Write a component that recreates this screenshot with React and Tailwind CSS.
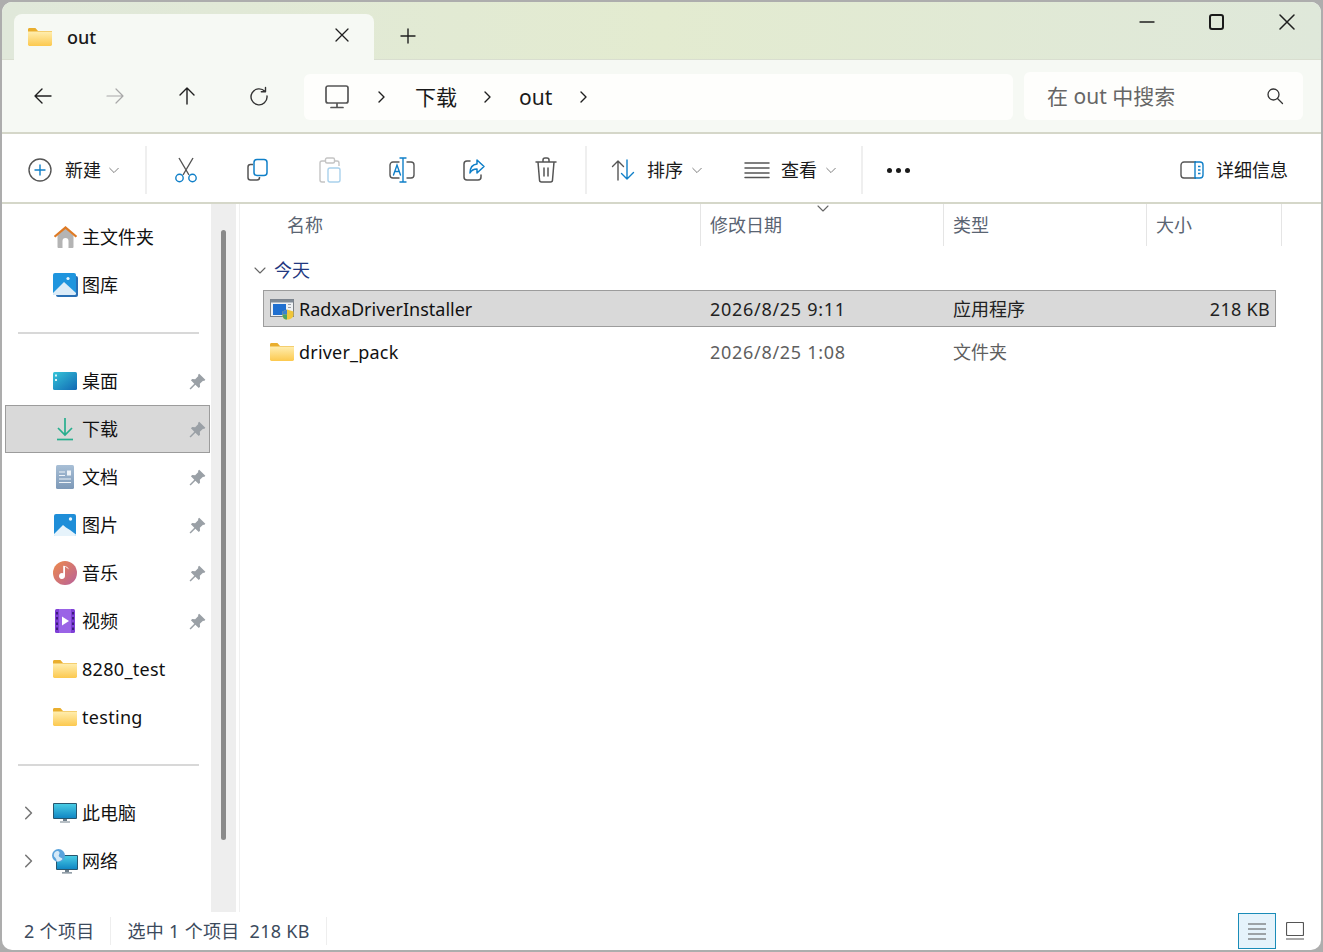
const font = { fontFamily: '"Noto Sans", "Noto Sans CJK SC", sans-serif' };

const Line = ({ w = 24, h = 24, vb, sw = 1.4, stroke = "#1f1f1f", children }) => (
  <svg width={w} height={h} viewBox={vb || `0 0 ${w} ${h}`} fill="none" stroke={stroke} strokeWidth={sw} strokeLinecap="round" strokeLinejoin="round">
    {children}
  </svg>
);

const Folder = ({ w = 24, h = 18 }) => (
  <svg width={w} height={h} viewBox="0 0 24 18">
    <defs>
      <linearGradient id="folderBody" x1="0" y1="0" x2="0" y2="1">
        <stop offset="0" stopColor="#ffeeb0" />
        <stop offset="1" stopColor="#fcc94f" />
      </linearGradient>
    </defs>
    <path d="M0 1.5C0 .7.6 0 1.4 0h6l2.6 3H24v2H0z" fill="#e9ae2e" />
    <path d="M0 3.5h24v13a1.4 1.4 0 0 1-1.4 1.4H1.4A1.4 1.4 0 0 1 0 16.5z" fill="url(#folderBody)" />
  </svg>
);

const HomeIcon = () => (
  <svg width="25" height="24" viewBox="0 0 25 24">
    <path d="M4.5 10.5 12.5 3l8 7.5V22a1 1 0 0 1-1 1h-4v-7a3 3 0 0 0-6 0v7h-4a1 1 0 0 1-1-1z" fill="#b4b4b4" />
    <path d="M.8 11 12.5 1l11.7 10-1.5 1.6L12.5 4 2.3 12.6z" fill="#de7a24" />
  </svg>
);

const GalleryIcon = () => (
  <svg width="25" height="24" viewBox="0 0 25 24">
    <rect x="3" y="3" width="22" height="21" rx="2" fill="#2a6fb4" />
    <rect x="0" y="0" width="23" height="22" rx="2" fill="#1f95de" />
    <path d="M0 20 11 9l12 11v.5a1.5 1.5 0 0 1-1.5 1.5h-20A1.5 1.5 0 0 1 0 20.5z" fill="#dcecf8" />
    <circle cx="15" cy="5.5" r="1.6" fill="#e9f5fc" />
  </svg>
);

const DesktopIcon = () => (
  <svg width="24" height="18" viewBox="0 0 24 18">
    <defs>
      <linearGradient id="deskBg" x1="0" y1="0" x2="1" y2="1">
        <stop offset="0" stopColor="#35c4d8" />
        <stop offset="1" stopColor="#1168b4" />
      </linearGradient>
    </defs>
    <rect width="24" height="18" rx="1.5" fill="url(#deskBg)" />
    <rect x="2" y="2.5" width="2" height="2" fill="#d8f3f8" />
    <rect x="2" y="7" width="2" height="2" fill="#d8f3f8" />
  </svg>
);

const DownloadIcon = () => (
  <svg width="18" height="24" viewBox="0 0 18 24" fill="none" stroke="#27ae8e" strokeWidth="1.7">
    <path d="M9 1v17M2 11l7 7 7-7" />
    <path d="M1 22.5h16" />
  </svg>
);

const DocIcon = () => (
  <svg width="18" height="24" viewBox="0 0 18 24">
    <defs>
      <linearGradient id="docBg" x1="0" y1="0" x2="0" y2="1">
        <stop offset="0" stopColor="#a8bfd6" />
        <stop offset="1" stopColor="#7d99b8" />
      </linearGradient>
    </defs>
    <rect width="18" height="24" rx="1.5" fill="url(#docBg)" />
    <path d="M3 7h6M3 10.5h6M3 14h12M3 17.5h12" stroke="#eef3f8" strokeWidth="1.2" />
    <rect x="11" y="5.5" width="4" height="5" fill="#eef3f8" />
  </svg>
);

const PictureIcon = () => (
  <svg width="22" height="22" viewBox="0 0 22 22">
    <rect width="22" height="22" rx="2" fill="#1f8ed8" />
    <path d="M0 20 9 11l3 2.5 4 2.5 6 4.5a1.5 1.5 0 0 1-1.5 1.5h-19A1.5 1.5 0 0 1 0 20z" fill="#e6f3fb" />
    <circle cx="16.5" cy="5" r="1.7" fill="#eaf6fd" />
  </svg>
);

const MusicIcon = () => (
  <svg width="24" height="24" viewBox="0 0 24 24">
    <defs>
      <linearGradient id="musicBg" x1="0" y1="0" x2="1" y2="1">
        <stop offset="0" stopColor="#ee8a4a" />
        <stop offset="1" stopColor="#b8619b" />
      </linearGradient>
    </defs>
    <circle cx="12" cy="12" r="12" fill="url(#musicBg)" />
    <path d="M12 5.5v9.5a3 3 0 1 1-1.8-2.7V4.7c2.5.3 5 1.3 5.8 3.8-1.3-1.2-2.6-1.8-4-3z" fill="#fff" />
  </svg>
);

const VideoIcon = () => (
  <svg width="20" height="24" viewBox="0 0 20 24">
    <rect width="20" height="24" rx="1.5" fill="#7e3fd6" />
    <rect x="4" y="0" width="12" height="24" fill="#9a63e6" />
    <path d="M1 3h2v2.5H1zM1 8h2v2.5H1zM1 13.5h2V16H1zM1 18.5h2V21H1zM17 3h2v2.5h-2zM17 8h2v2.5h-2zM17 13.5h2V16h-2zM17 18.5h2V21h-2z" fill="#3e1d7e" />
    <path d="M7 7.5v9l7-4.5z" fill="#fff" />
  </svg>
);

const PcIcon = () => (
  <svg width="24" height="20" viewBox="0 0 24 20">
    <defs>
      <linearGradient id="pcBg" x1="0" y1="0" x2="0" y2="1">
        <stop offset="0" stopColor="#48cbe4" />
        <stop offset="1" stopColor="#1187c4" />
      </linearGradient>
    </defs>
    <rect x="0" y="0" width="24" height="16" rx="1" fill="#27566f" />
    <rect x="1" y="1" width="22" height="14" fill="url(#pcBg)" />
    <path d="M10 16h4v2h-4zM7 18.4h10v1.2H7z" fill="#70808c" />
  </svg>
);

const NetIcon = () => (
  <svg width="26" height="25" viewBox="0 0 26 25">
    <defs>
      <linearGradient id="netBg" x1="0" y1="0" x2="0" y2="1">
        <stop offset="0" stopColor="#48cbe4" />
        <stop offset="1" stopColor="#1187c4" />
      </linearGradient>
    </defs>
    <rect x="4" y="6" width="22" height="15" rx="1" fill="#27566f" />
    <rect x="5" y="7" width="20" height="13" fill="url(#netBg)" />
    <path d="M13 21h4v2h-4zM10 23.3h10v1.2H10z" fill="#70808c" />
    <circle cx="6.5" cy="6.5" r="6.5" fill="#5aa3dc" />
    <path d="M3 3c2-1.500 4-1 4.500.5S6 6 7 7.500s3 1 3.500 2.500c-1.500 2-4 3-6 2.200C5 10 3 8.500 2 7.500 1.500 6 2 4 3 3z" fill="#d5e9f7" />
  </svg>
);

const PinIcon = () => (
  <svg width="17" height="17" viewBox="0 0 16 16" fill="#9aa0a6">
    <path d="M9.600.6 15.400 6.400 14.200 7.600 13.200 7.200 10.200 10.200 10.400 13 9.200 14.200 6 11 1.500 15.500.5 14.500 5 10 1.800 6.800 3 5.600 5.800 5.800 8.800 2.800 8.400 1.800z" />
  </svg>
);

const Chevron = ({ dir = "right", size = 14, stroke = "#1f1f1f", sw = 1.4 }) => {
  const d = dir === "right" ? "M5 2l5 5-5 5" : "M2 5l5 5 5-5";
  return (
    <svg width={size} height={size} viewBox="0 0 14 14" fill="none" stroke={stroke} strokeWidth={sw} strokeLinecap="round" strokeLinejoin="round">
      <path d={d} />
    </svg>
  );
};

const NavBtn = ({ children }) => <div className="flex h-12 w-[72px] shrink-0 items-center justify-center">{children}</div>;
const ToolBtn = ({ children }) => <div className="flex h-12 w-[72px] shrink-0 items-center justify-center">{children}</div>;
const Sep = () => <div className="h-12 w-[2px] shrink-0 bg-[#efefef]" />;

const sideItems = [
  { label: "主文件夹", icon: <HomeIcon /> },
  { label: "图库", icon: <GalleryIcon /> },
  { divider: true },
  { label: "桌面", icon: <DesktopIcon />, pin: true },
  { label: "下载", icon: <DownloadIcon />, pin: true, active: true },
  { label: "文档", icon: <DocIcon />, pin: true },
  { label: "图片", icon: <PictureIcon />, pin: true },
  { label: "音乐", icon: <MusicIcon />, pin: true },
  { label: "视频", icon: <VideoIcon />, pin: true },
  { label: "8280_test", icon: <Folder />, wide: true },
  { label: "testing", icon: <Folder />, wide: true },
  { divider: true },
  { label: "此电脑", icon: <PcIcon />, arrow: true },
  { label: "网络", icon: <NetIcon />, arrow: true },
];

const SideRow = ({ item }) => {
  if (item.divider) {
    return (
      <div className="flex h-12 items-center pl-[13px] pr-[11px]">
        <div className="h-[2px] w-full bg-[#d8d8d8]" />
      </div>
    );
  }
  return (
    <div className={`flex h-12 items-center border pr-[3px] ${item.active ? "border-[#9c9c9c] bg-[#d9d9d9]" : "border-transparent"}`}>
      <div className="flex w-[46px] shrink-0 items-center justify-center pr-[2px]">
        {item.arrow ? <Chevron stroke="#777777" size={16} /> : null}
      </div>
      <div className="flex w-[26px] shrink-0 items-center justify-center">{item.icon}</div>
      <span className={`ml-1 text-[18px] leading-none text-[#111111] ${item.wide ? "tracking-[0.3px]" : ""}`}>{item.label}</span>
      {item.pin ? <div className="ml-auto"><PinIcon /></div> : null}
    </div>
  );
};

const FileRow = ({ icon, name, date, type, size, selected, wide }) => (
  <div className={`flex h-[37px] w-[1013px] items-center border pl-[6px] pt-[1px] text-[18px] ${selected ? "border-[#9c9c9c] bg-[#d9d9d9]" : "border-transparent"}`}>
    <div className="flex w-[440px] shrink-0 items-center">
      <div className="flex w-[24px] shrink-0 justify-center">{icon}</div>
      <span className={`ml-[5px] text-[#111111] ${wide ? "tracking-[0.2px]" : ""}`}>{name}</span>
    </div>
    <span className={`w-[243px] shrink-0 tracking-[0.7px] ${selected ? "text-[#222222]" : "text-[#5f5f5f]"}`}>{date}</span>
    <span className={`flex-1 ${selected ? "text-[#222222]" : "text-[#5f5f5f]"}`}>{type}</span>
    <span className="pr-[5px] tracking-[0.3px] text-[#222222]">{size}</span>
  </div>
);

const ExeIcon = () => (
  <svg width="24" height="21" viewBox="0 0 24 21">
    <rect x="0.500" y="0.500" width="23" height="17" fill="#eef1f4" stroke="#7a7f86" />
    <rect x="0.500" y="0.500" width="23" height="3" fill="#7f8a96" />
    <rect x="3" y="5" width="13" height="11" fill="#1f6fd0" />
    <path d="M18 5.500h3M18 8.500h3" stroke="#9aa0a8" />
    <path d="M17 10.500l6.500 2v3.500c0 2.500-3 4.500-6.500 4.500s-4.500-2-4.500-4.500v-3.500z" fill="#f0c63a" />
    <path d="M12.500 15.500H17V20.500c-3 0-4.500-2-4.500-5z" fill="#4aa564" />
    <path d="M17 10.500l-4.500 2v3h4.500z" fill="#3b82d0" />
  </svg>
);

export default function App() {
  return (
    <div className="h-[952px] w-[1323px] overflow-hidden bg-[#adadad] p-[2px]" style={font}>
      <div className="flex h-full w-full flex-col overflow-hidden rounded-[10px] bg-white">
        {/* title bar */}
        <div className="flex h-[58px] shrink-0 items-start border-b border-[#d9ded0] bg-gradient-to-r from-[#e0e8da] via-[#e3ebd0] to-[#dfe8da] pl-[12px]">
          <div className="mt-[12px] flex h-[46px] w-[360px] shrink-0 items-center rounded-t-[8px] bg-[#f6f9f4] pl-[14px]">
            <Folder />
            <span className="ml-[15px] text-[18px] font-medium text-[#1a1a1a]">out</span>
            <div className="ml-auto mr-[24px] -translate-y-[2px]">
              <Line w={16} h={16} sw={1.3}><path d="M2 2l12 12M14 2 2 14" /></Line>
            </div>
          </div>
          <div className="mt-[12px] flex h-[44px] w-[68px] items-center justify-center">
            <Line w={16} h={16} sw={1.4}><path d="M8 1v14M1 8h14" /></Line>
          </div>
          <div className="ml-auto flex">
            <div className="flex h-[40px] w-[70px] items-center justify-center pl-[2px]">
              <Line w={16} h={16} sw={1.4}><path d="M1 8h14" /></Line>
            </div>
            <div className="flex h-[40px] w-[70px] items-center justify-center">
              <div className="h-[16px] w-[15px] rounded-[3px] border-2 border-[#1a1a1a]" />
            </div>
            <div className="flex h-[40px] w-[70px] items-center justify-center pl-[2px]">
              <Line w={16} h={16} sw={1.5}><path d="M1 1l14 14M15 1 1 15" /></Line>
            </div>
          </div>
        </div>

        {/* nav bar */}
        <div className="flex h-[74px] shrink-0 items-end border-b-2 border-[#d5d7c9] bg-[#f6f9f4] pb-[12px] pl-[5px]">
          <NavBtn><Line w={20} h={20} sw={1.4}><path d="M18 10H2M9 3l-7 7 7 7" /></Line></NavBtn>
          <NavBtn><Line w={20} h={20} sw={1.2} stroke="#a8a8a8"><path d="M2 10h16M11 3l7 7-7 7" /></Line></NavBtn>
          <NavBtn><Line w={20} h={20} sw={1.4}><path d="M10 18V2M3 9l7-7 7 7" /></Line></NavBtn>
          <NavBtn>
            <Line w={20} h={20} sw={1.4} stroke="#333333"><path d="M16 5.500A8 8 0 1 0 18 10M16.500 1.500v4.200h-4.200" /></Line>
          </NavBtn>
          <div className="ml-[9px] flex h-[46px] w-[709px] shrink-0 items-center rounded-[6px] bg-[#fefefc] pl-[21px]">
            <Line w={24} h={24} sw={1.7} stroke="#555555"><path d="M3 1h18a2 2 0 0 1 2 2v13a2 2 0 0 1-2 2H3a2 2 0 0 1-2-2V3a2 2 0 0 1 2-2zM12 18v4M6 22.500h12" /></Line>
            <div className="ml-[25px]"><Chevron size={14} /></div>
            <span className="ml-[27px] text-[21px] leading-none text-[#1a1a1a]">下载</span>
            <div className="ml-[23px]"><Chevron size={14} /></div>
            <span className="ml-[25px] text-[21px] leading-none text-[#1a1a1a]">out</span>
            <div className="ml-[24px]"><Chevron size={14} /></div>
          </div>
          <div className="ml-[11px] flex h-12 w-[279px] shrink-0 items-center rounded-[6px] bg-[#fefefc] pl-[23px] pr-[19px]">
            <span className="text-[21px] leading-none text-[#666666]">在 out 中搜索</span>
            <div className="ml-auto">
              <Line w={18} h={18} sw={1.3} stroke="#333333"><circle cx="7.500" cy="7.500" r="5.500" /><path d="M11.500 11.500l5 5" /></Line>
            </div>
          </div>
        </div>

        {/* toolbar */}
        <div className="flex h-[70px] shrink-0 items-center border-b-2 border-[#d5d7c9] pt-[4px] text-[18px] text-[#1a1a1a]">
          <div className="flex w-[143px] shrink-0 items-center pl-[26px]">
            <svg width="24" height="24" viewBox="0 0 24 24" fill="none" strokeWidth="1.4" strokeLinecap="round">
              <circle cx="12" cy="12" r="11" stroke="#555555" />
              <path d="M12 7v10M7 12h10" stroke="#0f7fc8" />
            </svg>
            <span className="ml-[13px]">新建</span>
            <div className="ml-[7px]"><Chevron dir="down" size={12} stroke="#777777" sw={1.1} /></div>
          </div>
          <Sep />
          <div className="ml-[3px] flex shrink-0">
            <ToolBtn>
              <svg width="24" height="26" viewBox="0 0 24 26" fill="none" strokeWidth="1.4">
                <path d="M5 1l10 17M19 1 9 18" stroke="#555555" />
                <circle cx="5.500" cy="21" r="3.700" stroke="#0f7fc8" />
                <circle cx="18.500" cy="21" r="3.700" stroke="#0f7fc8" />
              </svg>
            </ToolBtn>
            <ToolBtn>
              <svg width="24" height="24" viewBox="0 0 24 24" fill="none" strokeWidth="1.5">
                <path d="M7 6.500H4.500A2.500 2.500 0 0 0 2 9v10.500A2.500 2.500 0 0 0 4.500 22H11a2.500 2.500 0 0 0 2.500-2.500V19" stroke="#555555" />
                <rect x="8" y="1.500" width="13" height="16" rx="3" stroke="#0f7fc8" />
              </svg>
            </ToolBtn>
            <ToolBtn>
              <svg width="24" height="26" viewBox="0 0 24 26" fill="none" strokeWidth="1.4">
                <path d="M8 4H4a2 2 0 0 0-2 2v17a2 2 0 0 0 2 2h3M16 4h3a2 2 0 0 1 2 2v3" stroke="#c4c4c4" />
                <rect x="7.500" y="1" width="9" height="5" rx="1.500" stroke="#c4c4c4" />
                <rect x="10" y="11" width="12" height="14" rx="2" stroke="#a9d1ec" />
              </svg>
            </ToolBtn>
            <ToolBtn>
              <svg width="26" height="26" viewBox="0 0 26 26" fill="none" strokeWidth="1.4" strokeLinecap="round">
                <path d="M10 5H4a3 3 0 0 0-3 3v10a3 3 0 0 0 3 3h6M18 5h4a3 3 0 0 1 3 3v10a3 3 0 0 1-3 3h-4" stroke="#555555" />
                <path d="M14 1v24M11 1h6M11 25h6" stroke="#0f7fc8" />
                <path d="M4.500 18 8 8l3.500 10M5.700 14.500h4.600" stroke="#0f7fc8" />
              </svg>
            </ToolBtn>
            <ToolBtn>
              <svg width="24" height="24" viewBox="0 0 24 24" fill="none" strokeWidth="1.5" strokeLinejoin="round" strokeLinecap="round">
                <path d="M8 3H5a3 3 0 0 0-3 3v13a3 3 0 0 0 3 3h11a3 3 0 0 0 3-3v-2" stroke="#555555" />
                <path d="M15 2l7 6.500-7 6.500v-4c-3.500 0-5.500 1-7 4 0-5 2.500-8.500 7-9z" stroke="#0f7fc8" />
              </svg>
            </ToolBtn>
            <ToolBtn>
              <Line w={24} h={26} sw={1.5} stroke="#555555"><path d="M2 5h20M9 5V3a2 2 0 0 1 2-2h2a2 2 0 0 1 2 2v2M4 5l1.500 18a2 2 0 0 0 2 2h9a2 2 0 0 0 2-2L20 5M10 11v8M14 11v8" /></Line>
            </ToolBtn>
          </div>
          <div className="ml-[3px]"><Sep /></div>
          <div className="flex w-[157px] shrink-0 items-center pl-[24px]">
            <svg width="24" height="24" viewBox="0 0 24 24" fill="none" strokeWidth="1.4" strokeLinecap="round" strokeLinejoin="round">
              <path d="M7 22V3M1.500 8.500 7 3l5.500 5.500" stroke="#555555" />
              <path d="M16 2v19M10.500 15.500 16 21l6.500-6.500" stroke="#0f7fc8" />
            </svg>
            <span className="ml-[12px]">排序</span>
            <div className="ml-[8px]"><Chevron dir="down" size={12} stroke="#777777" sw={1.1} /></div>
          </div>
          <div className="flex w-[117px] shrink-0 items-center">
            <Line w={26} h={18} sw={1.5} stroke="#555555"><path d="M1 2h24M1 7h24M1 12h24M1 16.500h24" /></Line>
            <span className="ml-[11px]">查看</span>
            <div className="ml-[8px]"><Chevron dir="down" size={12} stroke="#777777" sw={1.1} /></div>
          </div>
          <Sep />
          <div className="flex w-[70px] shrink-0 items-center justify-center gap-[4px]">
            <div className="size-[5px] rounded-full bg-[#1a1a1a]" />
            <div className="size-[5px] rounded-full bg-[#1a1a1a]" />
            <div className="size-[5px] rounded-full bg-[#1a1a1a]" />
          </div>
          <div className="ml-auto flex items-center pr-[33px]">
            <svg width="24" height="18" viewBox="0 0 24 18" fill="none" strokeWidth="1.4">
              <path d="M16 1H4a3 3 0 0 0-3 3v10a3 3 0 0 0 3 3h12" stroke="#555555" />
              <path d="M15 1h5a3 3 0 0 1 3 3v10a3 3 0 0 1-3 3h-5z" stroke="#0f7fc8" />
              <path d="M18 5.500h2.500M18 9h2.500M18 12.500h2.500" stroke="#0f7fc8" />
            </svg>
            <span className="ml-[12px]">详细信息</span>
          </div>
        </div>

        {/* main */}
        <div className="flex min-h-0 flex-1">
          <div className="w-[209px] shrink-0 pl-[3px] pr-px pt-[9px]">
            {sideItems.map((item, i) => <SideRow key={i} item={item} />)}
          </div>
          <div className="w-[25px] shrink-0 bg-[#eeeeee] pl-[10px] pt-[26px]">
            <div className="h-[610px] w-[5px] rounded-full bg-[#8a8a8a]" />
          </div>
          <div className="w-[3px] shrink-0" />
          <div className="min-w-0 flex-1 border-l border-[#f0f0f0]">
            <div className="relative flex h-[42px] text-[18px] text-[#5a6472]">
              <div className="flex w-[460px] shrink-0 items-center pl-[47px]">名称</div>
              <div className="flex w-[243px] shrink-0 items-center border-l border-[#e5e5e5] pl-[9px]">修改日期</div>
              <div className="flex w-[203px] shrink-0 items-center border-l border-[#e5e5e5] pl-[9px]">类型</div>
              <div className="flex w-[136px] shrink-0 items-center border-x border-[#e5e5e5] pl-[9px]">大小</div>
              <div className="absolute left-[576px] top-[-3px]"><Chevron dir="down" size={14} stroke="#666666" sw={1.1} /></div>
            </div>
            <div className="ml-[13px] mt-[4px] flex h-[40px] items-center">
              <Chevron dir="down" size={14} stroke="#666666" sw={1.1} />
              <span className="ml-[7px] text-[18px] text-[#22387f]">今天</span>
            </div>
            <div className="ml-[23px] flex flex-col gap-[6px]">
              <FileRow selected icon={<ExeIcon />} name="RadxaDriverInstaller" date="2026/8/25 9:11" type="应用程序" size="218 KB" />
              <FileRow wide icon={<Folder />} name="driver_pack" date="2026/8/25 1:08" type="文件夹" />
            </div>
          </div>
        </div>

        {/* status bar */}
        <div className="flex h-[38px] shrink-0 items-center pl-[22px] text-[18px] tracking-[0.3px] text-[#3c4a5c]">
          <span>2 个项目</span>
          <div className="ml-[16px] h-[28px] w-px bg-[#eeeeee]" />
          <span className="ml-[16px]">选中 1 个项目</span>
          <span className="ml-[10px]">218 KB</span>
          <div className="ml-[16px] h-[28px] w-px bg-[#eeeeee]" />
          <div className="ml-auto flex items-center pr-[17px]">
            <div className="flex h-[36px] w-[38px] items-center justify-center border border-[#1a8cb8] bg-[#e5f3fb]">
              <Line w={18} h={18} sw={1.2} stroke="#555555"><path d="M0 2h18M0 7h18M0 12h18M0 17h18" /></Line>
            </div>
            <div className="ml-[10px]">
              <Line w={18} h={18} sw={1.2} stroke="#555555"><path d="M1.500.500h15a1 1 0 0 1 1 1v11a1 1 0 0 1-1 1h-15a1 1 0 0 1-1-1v-11a1 1 0 0 1 1-1zM0 17h18" /></Line>
            </div>
          </div>
        </div>
      </div>
    </div>
  );
}
